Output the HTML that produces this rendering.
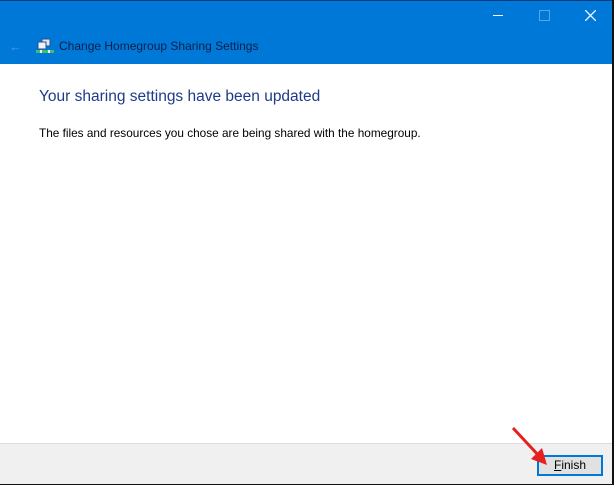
<!DOCTYPE html>
<html><head><style>
html,body{margin:0;padding:0;}
body{width:614px;height:485px;position:relative;overflow:hidden;background:#fff;font-family:"Liberation Sans",sans-serif;}
.win{position:absolute;left:0;top:0;width:612px;height:483px;border-right:2px solid #111;border-bottom:2px solid #111;background:#fff;}
.hdr{position:absolute;left:0;top:0;width:612px;height:64px;background:#0078d7;border-top:1px solid #0a3a7a;box-sizing:border-box;}
.title{position:absolute;left:59px;top:38px;font-size:12px;color:#0b1f4a;}
.back{position:absolute;left:9px;top:38px;color:#4a9be4;font-size:13px;}
h1{position:absolute;left:39px;top:88px;margin:0;font-weight:normal;font-size:15.5px;color:#1e3a8a;}
p{position:absolute;left:39px;top:126px;margin:0;font-size:11.8px;color:#000;}
.foot{position:absolute;left:0;top:443px;width:612px;height:40px;background:#f0f0f0;border-top:1px solid #dcdcdc;}
.btn{position:absolute;left:537px;top:455px;width:62px;height:17px;border:2px solid #0078d7;background:#e1e1e1;box-sizing:content-box;font-size:12px;text-align:center;line-height:17px;}
</style></head><body>
<div class="win">
<div class="hdr">
<div class="back">&#8592;</div>
<svg style="position:absolute;left:36px;top:37px" width="18" height="16" viewBox="0 0 18 16">
<rect x="6" y="1" width="8" height="7" fill="#dfe8f3" stroke="#2a4f8f"/>
<rect x="2" y="4" width="8" height="7" fill="#eef3f9" stroke="#2a4f8f"/>
<rect x="0" y="12" width="18" height="3" fill="#3cc06a"/>
<rect x="4" y="12" width="2" height="3" fill="#fff"/><rect x="12" y="12" width="2" height="3" fill="#fff"/>
</svg>
<div class="title">Change Homegroup Sharing Settings</div>
<div style="position:absolute;left:493px;top:14px;width:10px;height:1px;background:#fff"></div>
<div style="position:absolute;left:539px;top:9px;width:9px;height:9px;border:1px solid #5aa4e6"></div>
<svg style="position:absolute;left:585px;top:9px" width="11" height="11"><path d="M0 0L11 11M11 0L0 11" stroke="#fff" stroke-width="1.3"/></svg>
</div>
<h1>Your sharing settings have been updated</h1>
<p>The files and resources you chose are being shared with the homegroup.</p>
<div class="foot"></div>
<div class="btn"><u>F</u>inish</div>
<svg style="position:absolute;left:510px;top:425px" width="40" height="42"><path d="M3 3L30 32" stroke="#e52020" stroke-width="3"/><path d="M21 34L37 40L32 23Z" fill="#e52020"/></svg>
</div>
</body></html>
